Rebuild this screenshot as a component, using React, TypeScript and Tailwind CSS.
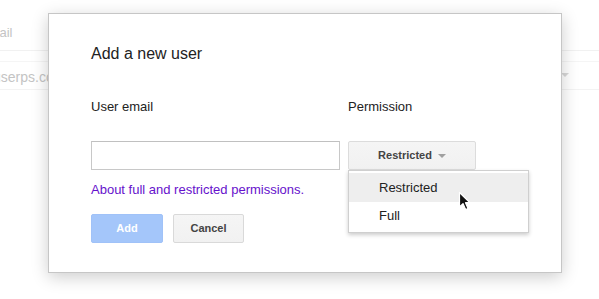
import React from 'react';

const font = { fontFamily: '"Liberation Sans", Arial, sans-serif' };

// Faded users table behind the dialog
const BackdropPage: React.FC = () => (
  <div className="absolute inset-0 text-[#c4c4c4] overflow-hidden">
    <div className="h-[51px] flex items-end pb-[8px] border-b border-[#f1f1f1] text-[13px] -ml-[20px]">
      Email
    </div>
    <div className="h-[11px] border-b border-[#f5f5f5]" />
    <div className="h-[28px] flex items-center justify-between -ml-[7px] pr-[30px] border-b border-[#f3f3f3]">
      <span className="text-[14px] pt-[4px]">userps.com</span>
      <span className="w-0 h-0 border-x-[4px] border-x-transparent border-t-[4px] border-t-[#d8d8d8] -mt-[2px]" />
    </div>
  </div>
);

const Cursor: React.FC = () => (
  <svg className="absolute left-[458px] top-[191px] z-20" width="14" height="21" viewBox="0 0 14 21">
    <path
      d="M1.5 1.5 L1.5 16 L5 12.6 L7.6 18.6 L10 17.5 L7.5 11.7 L12 11.7 Z"
      fill="#111"
      stroke="#fff"
      strokeWidth="1.2"
      strokeLinejoin="round"
    />
  </svg>
);

export default function App() {
  return (
    <div className="relative w-[599px] h-[299px] bg-white overflow-hidden" style={font}>
      <BackdropPage />

      {/* Dialog */}
      <div className="absolute left-[48px] top-[13px] w-[514px] h-[260px] bg-white border border-[#c6c6c6] shadow-[0_4px_16px_rgba(0,0,0,0.2)] pl-[42px] pt-[30px]">
        <h2 className="text-[16px] leading-[20px] text-[#222]">Add a new user</h2>

        <div className="flex mt-[35px] text-[13px] leading-[16px] text-[#222]">
          <div className="w-[257px]">User email</div>
          <div>Permission</div>
        </div>

        <div className="flex mt-[26px]">
          <input
            type="text"
            className="w-[249px] h-[29px] mr-[8px] border border-[#c8c8c8] border-t-[#c0c0c0] bg-white outline-none"
          />
          <div className="relative">
            <button className="w-[128px] h-[29px] flex items-center justify-center gap-[6px] rounded-[2px] border border-[#dcdcdc] bg-gradient-to-b from-[#f5f5f5] to-[#f1f1f1] text-[11px] font-bold text-[#444]">
              Restricted
              <span className="w-0 h-0 border-x-[4px] border-x-transparent border-t-[4px] border-t-[#a0a0a0]" />
            </button>

            {/* Dropdown menu */}
            <div className="absolute left-0 top-[29px] w-[181px] bg-white border border-[#cfcfcf] shadow-[0_2px_4px_rgba(0,0,0,0.2)] py-[2px] text-[13px] text-[#222] z-10">
              <div className="h-[29px] flex items-center pl-[30px] bg-[#eeeeee]">Restricted</div>
              <div className="h-[28px] flex items-center pl-[30px]">Full</div>
            </div>
          </div>
        </div>

        <div className="mt-[12px] text-[13px] leading-[16px] text-[#6611cc]">
          About full and restricted permissions.
        </div>

        <div className="flex gap-[10px] mt-[16px]">
          <button className="w-[72px] h-[29px] rounded-[2px] border border-[#a0c2f8] bg-[#a4c6fa] text-[11px] font-bold text-white">
            Add
          </button>
          <button className="w-[71px] h-[29px] rounded-[2px] border border-[#d9d9d9] bg-gradient-to-b from-[#f5f5f5] to-[#f1f1f1] text-[11px] font-bold text-[#444]">
            Cancel
          </button>
        </div>
      </div>

      <Cursor />
    </div>
  );
}
